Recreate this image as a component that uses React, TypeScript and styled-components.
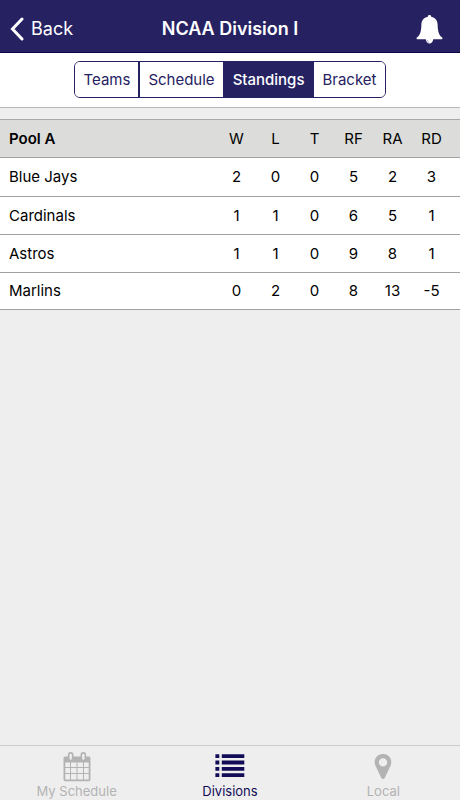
import React from "react";
import styled, { createGlobalStyle } from "styled-components";

const navy = "#262262";
const deepNavy = "#120c58";
const muted = "#b3b3b3";

const GlobalStyle = createGlobalStyle`
  *, *::before, *::after { box-sizing: border-box; }
  body {
    margin: 0;
    background: #eeeeee;
    color: #000000;
    font-family: Inter, "Liberation Sans", sans-serif;
    font-size: 15px;
  }
  button { font-family: inherit; cursor: pointer; }
`;

const Screen = styled.div`
  display: flex;
  flex-direction: column;
  min-height: 100vh;
`;

const NavBar = styled.header`
  display: grid;
  grid-template-columns: 1fr auto 1fr;
  align-items: center;
  height: 53px;
  padding: 6px 9px 0;
  background: ${navy};
  border-bottom: 1px solid #0b0650;
  color: #ffffff;
`;

const Title = styled.h1`
  margin: 0;
  font-size: 18px;
  font-weight: 600;
  line-height: 24px;
`;

const BackButton = styled.button`
  display: flex;
  align-items: center;
  justify-self: start;
  gap: 7px;
  padding: 0;
  border: 0;
  background: none;
  color: inherit;
  font-size: 18px;
  font-weight: 400;
  line-height: 24px;
`;

const IconButton = styled.button`
  display: flex;
  justify-self: end;
  padding: 0 8px 0 0;
  border: 0;
  background: none;
  color: inherit;
`;

const SegmentBar = styled.nav`
  display: flex;
  justify-content: center;
  height: 55px;
  padding: 8px 0 9px;
  background: #ffffff;
  border-bottom: 1px solid #b8b8b8;
`;

const Segments = styled.div`
  display: flex;
  height: 37px;
  overflow: hidden;
  border: 1px solid ${navy};
  border-radius: 6px;
`;

const Segment = styled.button<{ $active?: boolean }>`
  padding: 0 8px;
  border: 0;
  background: ${(p) => (p.$active ? navy : "#ffffff")};
  color: ${(p) => (p.$active ? "#ffffff" : navy)};
  font-size: 15px;
  font-weight: ${(p) => (p.$active ? 500 : 400)};
  line-height: 20px;

  & + & { border-left: 2px solid ${navy}; }
`;

const Content = styled.main`
  flex: 1;
  padding-top: 11px;
`;

const Table = styled.table`
  width: 100%;
  table-layout: fixed;
  border-collapse: separate;
  border-spacing: 0;
  border-top: 1px solid #a9a9a9;
`;

const HeadRow = styled.tr`
  height: 38px;
  background: #dcdcda;
`;

const BodyRow = styled.tr`
  height: 38px;
  background: #ffffff;

  &:first-child { height: 39px; }
  &:last-child { height: 37px; }
`;

const NameCell = styled.th<{ $bold?: boolean }>`
  padding: 0 9px;
  border-bottom: 1px solid #a0a0a0;
  font-weight: ${(p) => (p.$bold ? 600 : 400)};
  line-height: 20px;
  text-align: left;
`;

const StatHead = styled.th`
  width: 39px;
  padding: 0;
  border-bottom: 1px solid #a0a0a0;
  font-weight: 400;
  line-height: 20px;
  text-align: center;

  &:last-child { width: 48px; padding-right: 9px; }
`;

const StatCell = styled.td`
  padding: 0;
  border-bottom: 1px solid #a0a0a0;
  font-weight: 400;
  line-height: 20px;
  text-align: center;

  &:last-child { padding-right: 9px; }
`;

const TabBar = styled.nav`
  display: grid;
  grid-template-columns: repeat(3, 1fr);
  height: 55px;
  border-top: 1px solid #cccccc;
`;

const Tab = styled.button<{ $active?: boolean }>`
  display: flex;
  flex-direction: column;
  align-items: center;
  padding: 6px 0 0;
  border: 0;
  background: none;
  color: ${(p) => (p.$active ? deepNavy : muted)};
  font-size: 13px;
  line-height: 16px;
`;

const BackIcon = () => (
  <svg width="15" height="24" viewBox="0 0 15 24" fill="none" aria-hidden="true">
    <path d="M13 2 3.500 12 13 22" stroke="currentColor" strokeWidth="3" strokeLinecap="round" strokeLinejoin="miter" />
  </svg>
);

const BellIcon = () => (
  <svg width="27" height="29" viewBox="0 0 27 29" fill="currentColor" aria-hidden="true">
    <path d="M13.500 0c1 0 1.700.7 1.700 1.700C19.300 2.500 21.500 5.600 21.600 9.500c.1 4.500.6 8 2.100 10.400.8 1.300 2.300 2 2.700 3.100.2.800-.2 1.300-1 1.300H17.200C17 26.800 15.500 28.500 13.500 28.500S10 26.800 9.800 24.300H1.600c-.8 0-1.200-.5-1-1.300.4-1.100 1.900-1.800 2.700-3.100 1.500-2.400 2-5.900 2.100-10.400C5.500 5.600 7.700 2.500 11.800 1.700 11.800.7 12.500 0 13.500 0Z" />
    <path d="M11.300 25c.1 1.300.8 2.100 1.900 2.300" fill="none" stroke={navy} strokeWidth=".4" />
  </svg>
);

const CalendarIcon = () => (
  <svg width="28" height="31" viewBox="0 0 28 31" fill="none" aria-hidden="true">
    <path fillRule="evenodd" fill="currentColor" d="M2 4.500H26Q27.500 4.500 27.500 6.500V27.300Q27.500 29.300 26 29.300H2Q.5 29.300.5 27.300V6.500Q.5 4.500 2 4.500ZM2.300 10.500V14.900H7V10.500ZM8 10.500V14.900H13.500V10.500ZM14.500 10.500V14.900H20V10.500ZM21 10.500V14.900H25.700V10.500ZM2.300 16V20.900H7V16ZM8 16V20.900H13.500V16ZM14.500 16V20.900H20V16ZM21 16V20.900H25.700V16ZM2.300 22V27.500H7V22ZM8 22V27.500H13.500V22ZM14.500 22V27.500H20V22ZM21 22V27.500H25.700V22Z" />
    <rect x="5.700" y=".9" width="4" height="7.600" rx="2" fill="#eeeeee" stroke="currentColor" strokeWidth="1.600" />
    <rect x="18.300" y=".9" width="4" height="7.600" rx="2" fill="#eeeeee" stroke="currentColor" strokeWidth="1.600" />
  </svg>
);

const ListIcon = () => (
  <svg width="30" height="31" viewBox="0 0 30 31" fill="currentColor" aria-hidden="true">
    {[2.2, 8.6, 14.9, 21.2].map((y) => (
      <path key={y} d={`M.4 ${y}h3.900v3.900H.4zM6.800 ${y}h22.500v3.900H6.800z`} />
    ))}
  </svg>
);

const PinIcon = () => (
  <svg width="18" height="31" viewBox="0 0 18 31" fill="currentColor" aria-hidden="true">
    <path fillRule="evenodd" d="M9 2c4.700 0 8.300 3.500 8.300 8 0 1.800-.5 3.200-1.300 4.800L10.700 26c-.7 1.400-2.700 1.400-3.400 0L2 14.800C1.200 13.200.7 11.800.7 10 .7 5.500 4.300 2 9 2Zm0 4.200a4.200 4.200 0 1 0 0 8.400 4.200 4.200 0 0 0 0-8.400Z" />
  </svg>
);

const sections = ["Teams", "Schedule", "Standings", "Bracket"];
const columns = ["W", "L", "T", "RF", "RA", "RD"];
const standings = [
  { team: "Blue Jays", stats: [2, 0, 0, 5, 2, 3] },
  { team: "Cardinals", stats: [1, 1, 0, 6, 5, 1] },
  { team: "Astros", stats: [1, 1, 0, 9, 8, 1] },
  { team: "Marlins", stats: [0, 2, 0, 8, 13, -5] },
];
const tabs = [
  { label: "My Schedule", Icon: CalendarIcon },
  { label: "Divisions", Icon: ListIcon },
  { label: "Local", Icon: PinIcon },
];

export default function App() {
  return (
    <Screen>
      <GlobalStyle />
      <NavBar>
        <BackButton type="button"><BackIcon />Back</BackButton>
        <Title>NCAA Division I</Title>
        <IconButton type="button" aria-label="Notifications"><BellIcon /></IconButton>
      </NavBar>
      <SegmentBar>
        <Segments>
          {sections.map((name) => (
            <Segment key={name} type="button" $active={name === "Standings"} aria-pressed={name === "Standings"}>{name}</Segment>
          ))}
        </Segments>
      </SegmentBar>
      <Content>
        <Table>
          <thead>
            <HeadRow>
              <NameCell scope="col" $bold>Pool A</NameCell>
              {columns.map((c) => <StatHead key={c} scope="col">{c}</StatHead>)}
            </HeadRow>
          </thead>
          <tbody>
            {standings.map(({ team, stats }) => (
              <BodyRow key={team}>
                <NameCell scope="row">{team}</NameCell>
                {stats.map((value, i) => <StatCell key={columns[i]}>{value}</StatCell>)}
              </BodyRow>
            ))}
          </tbody>
        </Table>
      </Content>
      <TabBar>
        {tabs.map(({ label, Icon }) => (
          <Tab key={label} type="button" $active={label === "Divisions"}><Icon />{label}</Tab>
        ))}
      </TabBar>
    </Screen>
  );
}
